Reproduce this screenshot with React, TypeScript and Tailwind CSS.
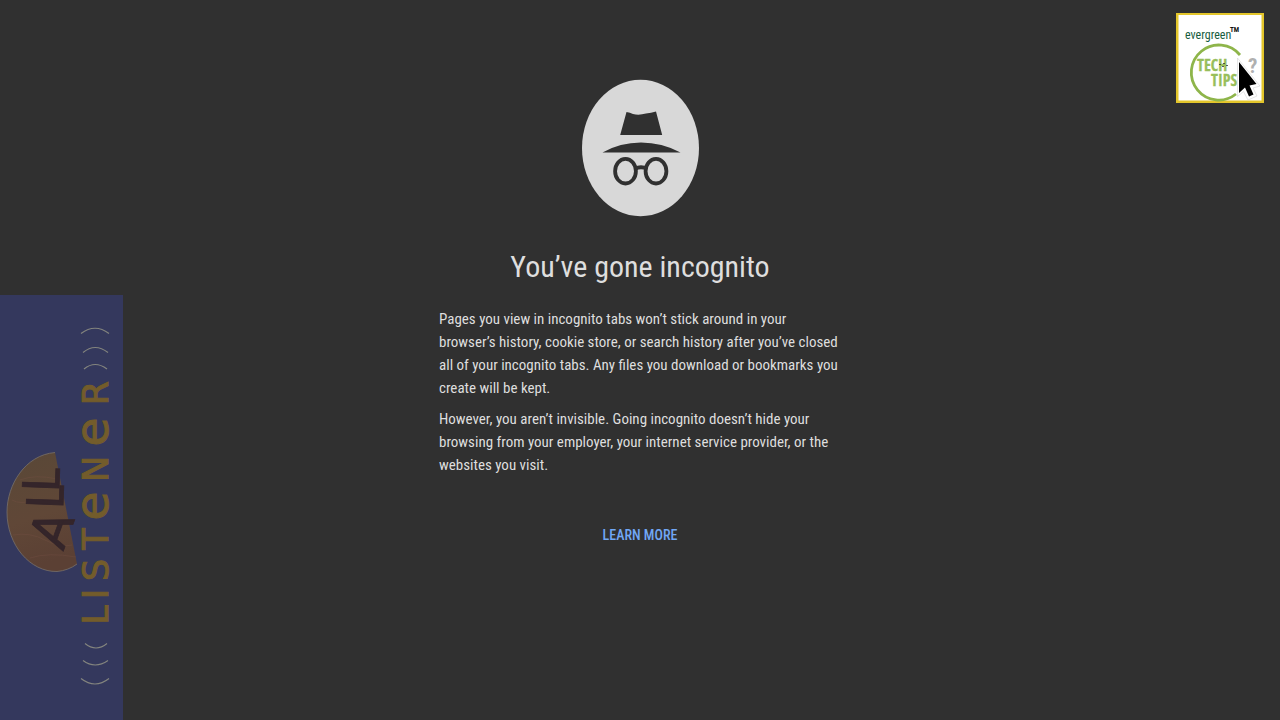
function IncognitoIcon() {
  return (
    <svg viewBox="0 0 118 138" className="h-[138px] w-[118px]" role="img" aria-label="Incognito">
      <ellipse cx="59.5" cy="69" rx="58.5" ry="68.2" fill="#d8d8d8" />
      <path d="M45.500 33 Q49 33.500 52 35 Q58 36.500 65 34.500 Q70 34 75 32.500 L81.200 56 H39.200 Z" fill="#303030" />
      <path d="M21.500 73.500 Q39 63.500 60 63.500 Q81 63.500 99.500 73.500 Z" fill="#303030" />
      <g fill="none" stroke="#303030" strokeWidth="3.8">
        <ellipse cx="44.500" cy="92.200" rx="10.400" ry="12.300" />
        <ellipse cx="75" cy="92.200" rx="10.400" ry="12.300" />
        <path d="M54 90 Q60 86.500 66 90" />
      </g>
    </svg>
  );
}

function ListenerBanner() {
  return (
    <svg viewBox="0 295 123 425" className="h-[425px] w-[123px]" role="img" aria-label="All Listener">
      <defs>
        <linearGradient id="wood" x1="0" y1="0" x2="0.2" y2="1">
          <stop offset="0" stopColor="#594837" />
          <stop offset="0.6" stopColor="#604737" />
          <stop offset="1" stopColor="#5b4034" />
        </linearGradient>
      </defs>
      <rect y="295" width="123" height="425" fill="#34385d" />
      <path d="M55 452.500 C25 455 7 485 7 512 C7 545 30 572 57 571.500 C64 571 72 568 77 564 Z" fill="url(#wood)" />
      <path d="M55 452.500 C25 455 7 485 7 512 C7 545 30 572 57 571.500 C64 571 72 568 77 564" fill="none" stroke="#77706a" strokeWidth="0.800" />
      <g fill="none" stroke="#765044" strokeWidth="0.700" opacity="0.500">
        <path d="M20 480 Q35 474 57 479M12 500 Q20 505 35 500M13 535 Q30 532 45 540T72 545M30 558 Q48 552 76 557" />
      </g>
      <g fill="#34252a" stroke="#34252a" strokeWidth="0.800" fontFamily="Roboto Condensed">
        <text transform="translate(63 552) rotate(-70)" fontFamily="Roboto" fontSize="54">A</text>
        <text transform="translate(63 509) rotate(-88)" fontSize="52">L</text>
        <text transform="translate(59 492) rotate(-88)" fontSize="52">L</text>
      </g>
      <g fill="none" stroke="#83847e" strokeWidth="1.200">
        <path d="M81 333.500Q95 323 109 333.500M83 352.500Q95 342.500 108 352.500M84 369Q95 360 107 369" />
        <path d="M85 643.500Q96 652.500 107 643.500M83 660.500Q95 669.500 108 660.500M81 678.500Q95 689.500 109 678.500" />
      </g>
      <g transform="translate(108 627) rotate(-90)" fill="#735c2b" stroke="#735c2b" strokeWidth="1" fontFamily="DejaVu Sans" fontSize="35" textAnchor="middle">
        <text x="12">L</text>
        <text x="33">I</text>
        <text x="57">S</text>
        <text x="88">T</text>
        <text x="121" fontSize="47">e</text>
        <text x="158">N</text>
        <text x="195" fontSize="47">e</text>
        <text x="234">R</text>
      </g>
    </svg>
  );
}

function TechTipsLogo() {
  return (
    <svg viewBox="0 0 88 90" className="h-[90px] w-[88px]" role="img" aria-label="Evergreen Tech Tips">
      <rect width="88" height="90" fill="#e3c62b" />
      <rect x="2.500" y="2" width="83" height="85.500" fill="#fff" />
      <text x="9" y="26" fontFamily="Roboto Condensed" fontSize="12" fill="#175c3e">evergreen</text>
      <text x="54" y="19" fontFamily="Roboto Condensed" fontWeight="700" fontSize="7" fill="#111">TM</text>
      <path d="M64 42 A27.500 27.500 0 1 0 60 81" fill="none" stroke="#8eb54a" strokeWidth="2.800" />
      <g fontFamily="Open Sans Condensed" fontWeight="700" fill="#98be5b" stroke="#98be5b" strokeWidth="0.300">
        <text x="21" y="58" fontSize="16">TECH</text>
        <text x="35" y="73" fontSize="16">TIPS</text>
      </g>
      <path d="M43 51.500h2m2 -1h2m-3 3h2m2 -1h2" stroke="#333" strokeWidth="0.800" />
      <text x="72" y="60" fontFamily="Roboto Condensed" fontWeight="700" fontSize="21" fill="#b0b0b0">?</text>
      <path d="M61.500 45 V83.500 L67.500 78.500 L72 87 L81 83 L77 75 L84 73 Z" fill="#fff" stroke="#ccc" strokeWidth="0.500" />
      <path d="M63 49 V80 L69 74.500 L73 83.500 L77.500 81.500 L73.500 72.500 L80.500 71 Z" fill="#000" />
    </svg>
  );
}

export default function App() {
  return (
    <div className="relative min-h-screen bg-[#303030] font-['Roboto_Condensed','Roboto',sans-serif] text-[#dedede]">
      <main className="mx-auto flex w-full max-w-[402px] flex-col items-center pt-[79px]">
        <IncognitoIcon />
        <h1 className="mt-[30px] text-[30px] leading-10">You’ve gone incognito</h1>
        <div className="mt-[21px] flex w-full flex-col gap-2 text-[15px] leading-[23px]">
          <p>
            Pages you view in incognito tabs won’t stick around in your browser’s history, cookie store, or search
            history after you’ve closed all of your incognito tabs. Any files you download or bookmarks you create
            will be kept.
          </p>
          <p>
            However, you aren’t invisible. Going incognito doesn’t hide your browsing from your employer, your
            internet service provider, or the websites you visit.
          </p>
        </div>
        <a href="#learn-more" className="mt-12 text-[14px] leading-5 font-medium text-[#71a7f5]">LEARN MORE</a>
      </main>
      <aside className="absolute bottom-0 left-0">
        <ListenerBanner />
      </aside>
      <div className="absolute top-[13px] right-4">
        <TechTipsLogo />
      </div>
    </div>
  );
}
